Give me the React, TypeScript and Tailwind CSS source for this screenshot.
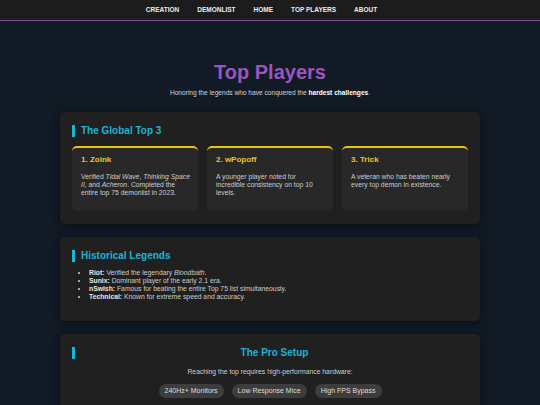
import * as React from 'react';

const NAV_LINKS = ['CREATION', 'DEMONLIST', 'HOME', 'TOP PLAYERS', 'ABOUT'];

const TOP_THREE = [
  {
    title: '1. Zoink',
    body: (
      <>
        Verified <em>Tidal Wave</em>, <em>Thinking Space II</em>, and <em>Acheron</em>. Completed the entire top 75
        demonlist in 2023.
      </>
    )
  },
  { title: '2. wPopoff', body: <>A younger player noted for incredible consistency on top 10 levels.</> },
  { title: '3. Trick', body: <>A veteran who has beaten nearly every top demon in existence.</> }
];

const LEGENDS = [
  { name: 'Riot:', text: <>Verified the legendary <em>Bloodbath</em>.</> },
  { name: 'Sunix:', text: <>Dominant player of the early 2.1 era.</> },
  { name: 'nSwish:', text: <>Famous for beating the entire Top 75 list simultaneously.</> },
  { name: 'Technical:', text: <>Known for extreme speed and accuracy.</> }
];

const HARDWARE = ['240Hz+ Monitors', 'Low Response Mice', 'High FPS Bypass'];

function SectionTitle(props: { children: React.ReactNode; center?: boolean }) {
  return (
    <h2
      className={`border-l-[3px] border-[#1ab4d6] pl-[6px] text-[10px] font-bold leading-[12px] text-[#1ab4d6] ${
        props.center ? 'text-center' : ''
      }`}
    >
      {props.children}
    </h2>
  );
}

function Section(props: { children: React.ReactNode; className?: string }) {
  return (
    <section
      className={`rounded-[5px] bg-[#202020] px-[12px] pt-[13px] shadow-[0_2px_8px_rgba(0,0,0,0.45)] ${props.className ?? ''}`}
    >
      {props.children}
    </section>
  );
}

export default function App() {
  return (
    <div
      className="min-h-[405px] bg-[#111a25] text-[#cfcfcf]"
      style={{ fontFamily: '"Liberation Sans", Arial, sans-serif' }}
    >
      <nav className="h-[21px] border-b border-[#7b4d9c] bg-[#1c1c1c]">
        <ul className="flex h-[20px] items-center justify-center gap-[18px] pr-[17px]">
          {NAV_LINKS.map((l) => (
            <li key={l} className="text-[6.5px] font-bold text-[#ececec]">
              {l}
            </li>
          ))}
        </ul>
      </nav>

      <main className="mx-auto w-[420px] pb-[20px]">
        <header className="pt-[39px] text-center">
          <h1 className="text-[20px] font-bold leading-[24px] text-[#9b55bf]">Top Players</h1>
          <p className="mt-[4px] text-[6.6px] leading-[10px] text-[#d4d4d4]">
            Honoring the legends who have conquered the <strong className="text-white">hardest challenges</strong>.
          </p>
        </header>

        <div className="mt-[14px] flex flex-col gap-[13px]">
          <Section className="pb-[13px]">
            <SectionTitle>The Global Top 3</SectionTitle>
            <div className="mt-[9px] grid grid-cols-3 gap-[9px]">
              {TOP_THREE.map((p) => (
                <div
                  key={p.title}
                  className="h-[65px] rounded-[5px] border-t-2 border-[#e8c40f] bg-[#282828] pl-[9px] pr-[7px] pt-[7px]"
                >
                  <h3 className="text-[8px] font-bold leading-[10px] text-[#f0c419]">{p.title}</h3>
                  <p className="mt-[8px] text-[6.8px] leading-[8px] text-[#cccccc]">{p.body}</p>
                </div>
              ))}
            </div>
          </Section>

          <Section className="h-[84px]">
            <SectionTitle>Historical Legends</SectionTitle>
            <ul className="mt-[7px] list-disc pl-[17px] text-[6.8px] leading-[8px] text-[#cccccc]">
              {LEGENDS.map((l) => (
                <li key={l.name}>
                  <strong className="text-[#e6e6e6]">{l.name}</strong> {l.text}
                </li>
              ))}
            </ul>
          </Section>

          <Section className="pb-[16px]">
            <SectionTitle center>The Pro Setup</SectionTitle>
            <p className="mt-[8px] text-center text-[6.8px] text-[#cccccc]">
              Reaching the top requires high-performance hardware:
            </p>
            <div className="mt-[7px] flex justify-center gap-[8px]">
              {HARDWARE.map((h) => (
                <span
                  key={h}
                  className="flex h-[14px] items-center rounded-full bg-[#3d3d3d] px-[6px] text-[7px] text-[#dddddd]"
                >
                  {h}
                </span>
              ))}
            </div>
          </Section>
        </div>
      </main>
    </div>
  );
}
